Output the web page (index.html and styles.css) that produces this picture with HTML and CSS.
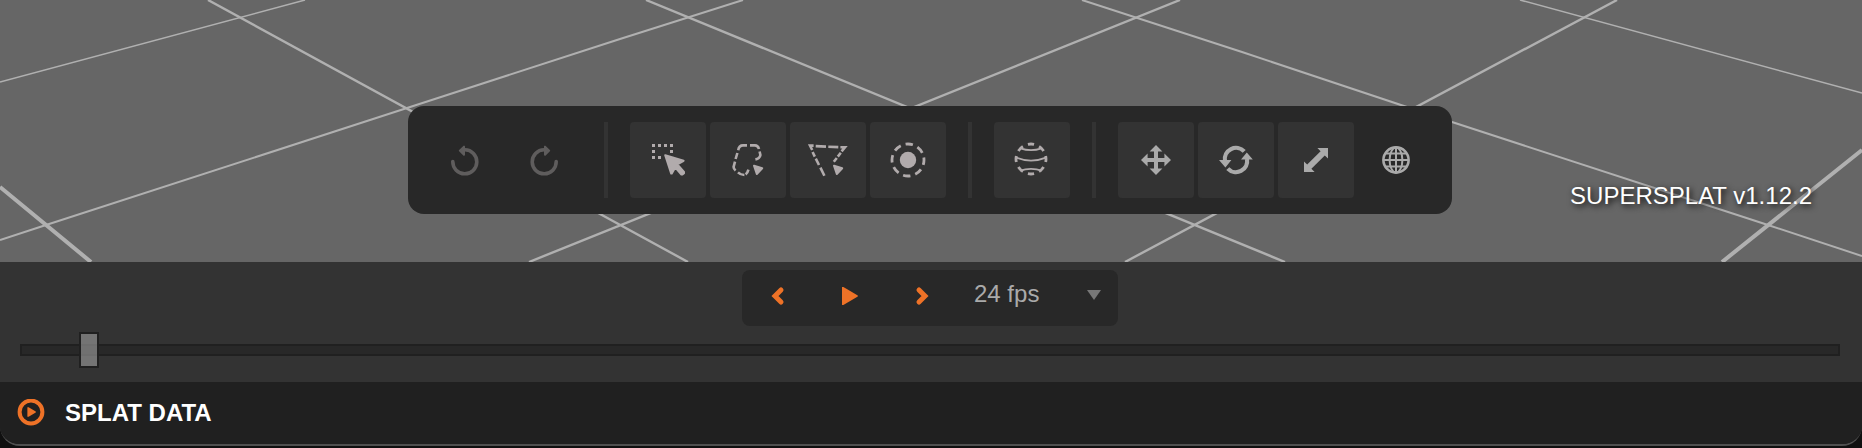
FILE: index.html
```html
<!DOCTYPE html>
<html lang="en">
<head>
<meta charset="utf-8">
<title>SuperSplat</title>
<link rel="stylesheet" href="styles.css">
</head>
<body>
<div class="app">
  <main class="viewport">
    <svg class="grid" viewBox="0 0 1862 262" preserveAspectRatio="xMidYMax slice" aria-hidden="true">
      <path class="grid-far" d="M0 82L305 0M1520 0L1862 93"/>
      <path class="grid-mid" d="M0 240L46 225L407 108L620 39L743 0M1082 0L1242 52L1452 122L1768 225L1862 256"/>
      <path class="grid-near" d="M208 0L688 262M529 262L1180 0M646 0L1285 262M1125 262L1617 0"/>
      <path class="grid-front" d="M0 187L91 262M1722 262L1862 150"/>
    </svg>
    <div class="toolbar" role="toolbar" aria-label="Tools">
      <button class="tool plain dim" aria-label="Undo"><svg viewBox="0 0 76 76">
        <path class="line bold round" d="M26.8 39.6A12 12 0 1 0 39 27.8"/>
        <path class="fill joined" d="M33.8 28.6L38 24.6V32.8Z"/></svg></button>
      <button class="tool plain dim" aria-label="Redo"><svg viewBox="0 0 76 76">
        <path class="line bold round" d="M50.2 39.6A12 12 0 1 1 38 27.8"/>
        <path class="fill joined" d="M43.2 28.6L39 24.6V32.8Z"/></svg></button>
      <span class="divider"></span>
      <button class="tool warm" aria-label="Rectangle select"><svg viewBox="0 0 76 76">
        <path class="fill" d="M22 22h3v3h-3zM28 22h3v3h-3zM34 22h3v3h-3zM40 22h3v3h-3zM22 28h3v3h-3zM40 28h3v3h-3zM22 34h3v3h-3zM28 34h3v3h-3z"/>
        <path class="fill joined" d="M35.2 33.2L53.6 38.8L47.4 42.4L54 49.8V51.2L52.4 52.6H51.4L45.2 45.4L41.8 51.6H41.2Z"/></svg></button>
      <button class="tool warm" aria-label="Lasso select"><svg viewBox="0 0 76 76">
        <path class="line" d="M28.2 28.2Q29 23.4 33 23.4H37M40 23.4H45Q48 23.4 49 27M49.6 29.5L50.4 33Q49.8 36.6 45.4 37.4M27.4 31L25.6 37M25 39.6L23.6 45Q23.6 47 25.6 48.6M28 50.4Q30.6 53 34.4 53M35.6 52.4Q37.6 51 38.4 47.6"/>
        <path class="fill joined" d="M44 43.8L52.2 46.2L46.8 52Z"/></svg></button>
      <button class="tool warm" aria-label="Polygon select"><svg viewBox="0 0 76 76">
        <path class="line" d="M23.6 23.6H20L22.2 28M22.6 30L24.8 34.6M25.8 36.6L29 43M30.4 45.6L34.4 53.8M25.7 24.1L36 24.6M38.3 24.7L48.3 25.1M50.4 25.2H55L51.6 29.4M50.8 30.8L47.8 34.6M46.8 36L43.8 39.8"/>
        <path class="fill joined" d="M44 43.8L52.2 46.2L46.8 52Z"/></svg></button>
      <button class="tool warm" aria-label="Brush select"><svg viewBox="0 0 76 76">
        <circle class="fill" cx="38" cy="38" r="8.2"/>
        <circle class="line ring" cx="38" cy="38" r="16" pathLength="80"/></svg></button>
      <span class="divider"></span>
      <button class="tool warm" aria-label="Sphere select"><svg viewBox="0 0 76 76">
        <circle class="line globe-ring" cx="37" cy="37" r="15" pathLength="80"/>
        <path class="line thin" d="M26.5 26.4Q37 30 47.5 26.4M22 35.6Q37 41.6 52 35.6M26 48.6Q37 45 48 48.6"/></svg></button>
      <span class="divider"></span>
      <button class="tool" aria-label="Move"><svg viewBox="0 0 76 76">
        <path class="fill" d="M38 23L44.4 29.6H40V36H46.4V31.6L53 38L46.4 44.4V40H40V46.4H44.4L38 53L31.6 46.4H36V40H29.6V44.4L23 38L29.6 31.6V36H36V29.6H31.6Z"/></svg></button>
      <button class="tool" aria-label="Rotate"><svg viewBox="0 0 76 76">
        <path class="line heavy" d="M27 39A11.2 11.2 0 0 1 46.2 29.4M49 37A11.2 11.2 0 0 1 29.8 46.6"/>
        <path class="fill" d="M21 38H33.4L27.4 45.4ZM54.8 37.4H43L48.8 30.4Z"/></svg></button>
      <button class="tool" aria-label="Scale"><svg viewBox="0 0 76 76">
        <path class="fill" d="M39.4 26H50V36.6L46.8 33.4L33.4 46.8L36.6 50H26V39.4L29.2 42.6L42.6 29.2Z"/></svg></button>
      <button class="tool plain" aria-label="World space"><svg viewBox="0 0 76 76">
        <circle class="line" cx="38" cy="38" r="12.6"/>
        <ellipse class="line slim" cx="38" cy="38" rx="6.4" ry="12.6"/>
        <path class="line slim" d="M38 25V51M26 38H50M28 31.6H48M28 44.4H48"/></svg></button>
    </div>
    <div class="version">SUPERSPLAT v1.12.2</div>
  </main>

  <section class="timeline" aria-label="Timeline">
    <div class="playback">
      <button class="step" aria-label="Previous key"><svg viewBox="0 0 24 24"><path class="chevron" d="M15 6L9 12L15 18"/></svg></button>
      <button class="step" aria-label="Play"><svg viewBox="0 0 24 24"><path class="fill" d="M4 3H5.4L19.8 11.4V12.6L5.4 21H4Z"/></svg></button>
      <button class="step" aria-label="Next key"><svg viewBox="0 0 24 24"><path class="chevron" d="M9 6L15 12L9 18"/></svg></button>
      <div class="rate">
        <select class="rate-select" aria-label="Frame rate"><option>24 fps</option></select>
        <svg class="caret" viewBox="0 0 14 10" aria-hidden="true"><path class="fill" d="M0 0H14L7 10Z"/></svg>
      </div>
    </div>
    <input class="scrubber" type="range" min="0" max="30" value="1" aria-label="Frame">
  </section>

  <button class="data-panel">
    <svg class="data-icon" viewBox="0 0 28 28" aria-hidden="true">
      <circle class="data-ring" cx="14" cy="13" r="11.4"/><path class="fill" d="M10.4 8.2H11.6L18.8 12.4V13.6L11.6 17.8H10.4Z"/></svg>
    <span>SPLAT DATA</span>
  </button>
</div>
</body>
</html>
```
FILE: styles.css
```css
* { box-sizing: border-box; }

body {
  margin: 0;
  background: #101010;
  color: #fff;
  font: 24px/28px "Liberation Sans", Arial, sans-serif;
}

button, select { font: inherit; color: inherit; border: 0; padding: 0; background: none; }

.app {
  display: flex;
  flex-direction: column;
  height: calc(100vh - 2px);
  overflow: hidden;
  border-bottom: 2px solid #505050;
  border-radius: 0 0 20px 20px;
  background: #202020;
}

.viewport {
  position: relative;
  flex: 1;
  display: flex;
  justify-content: center;
  align-items: flex-end;
  padding: 0 0 48px;
  background: #666;
}

.grid { position: absolute; inset: 0; width: 100%; height: 100%; }
.grid path { fill: none; stroke: #b0b0b0; }
.grid .grid-far { stroke-width: 1.5; }
.grid .grid-mid { stroke-width: 2; }
.grid .grid-near { stroke-width: 2.4; }
.grid .grid-front { stroke-width: 4; }

.toolbar {
  position: relative;
  display: flex;
  gap: 4px;
  margin-right: 2px;
  padding: 16px 18px;
  border-radius: 16px;
  background: #282828;
}

.tool {
  width: 76px;
  height: 76px;
  border-radius: 4px;
  background: #333;
  color: #aaa;
}
.tool svg { display: block; }
.tool.plain { background: none; }
.tool.warm { color: #b1abac; }
.tool.dim { color: #5f5d5d; }

.divider { width: 4px; margin: 0 18px; background: #333; }

.fill { fill: currentColor; }
.joined { stroke: currentColor; stroke-width: 2; stroke-linejoin: round; }
.line { fill: none; stroke: currentColor; stroke-width: 2.6; }
.bold { stroke-width: 3.6; }
.heavy { stroke-width: 4.2; }
.thin { stroke-width: 1.8; }
.slim { stroke-width: 2; }
.round { stroke-linecap: round; }
.ring { stroke-width: 2.8; stroke-dasharray: 6 4; stroke-dashoffset: 2; }
.globe-ring { stroke-width: 2.8; stroke-dasharray: 5.4 4.6; stroke-dashoffset: 2.7; }

.version {
  position: absolute;
  right: 50px;
  bottom: 52px;
  text-shadow: 2px 2px 6px #000;
}

.timeline {
  display: flex;
  flex-direction: column;
  align-items: center;
  gap: 6px;
  padding: 8px 22px 14px 20px;
  background: #333;
}

.playback {
  display: flex;
  align-items: flex-start;
  height: 56px;
  border-radius: 8px;
  background: #282828;
}

.step {
  display: flex;
  justify-content: center;
  align-items: center;
  width: 72px;
  height: 52px;
  color: #ee7227;
}
.step svg { width: 24px; height: 24px; }
.chevron { fill: none; stroke: currentColor; stroke-width: 5; stroke-linejoin: miter; stroke-linecap: round; }

.rate { position: relative; width: 160px; }
.rate-select {
  appearance: none;
  width: 100%;
  height: 48px;
  padding: 0 16px;
  color: #aaa;
}
.caret { position: absolute; right: 17px; top: 20px; width: 14px; height: 10px; color: #777; pointer-events: none; }

.scrubber {
  appearance: none;
  width: 100%;
  height: 36px;
  margin: 0;
  background: none;
}
.scrubber::-webkit-slider-runnable-track {
  height: 12px;
  border: 2px solid #202020;
  background: #282828;
}
.scrubber::-webkit-slider-thumb {
  appearance: none;
  width: 20px;
  height: 36px;
  margin: -14px -3px 0;
  border: 2px solid #202020;
  background: rgb(144 144 144 / 70%);
  background-clip: padding-box;
}

.data-panel {
  display: flex;
  align-items: center;
  gap: 20px;
  height: 62px;
  padding: 0 17px;
  background: #202020;
  font-weight: bold;
  text-align: left;
}
.data-icon { width: 28px; height: 28px; color: #ee7227; }
.data-ring { fill: none; stroke: currentColor; stroke-width: 4; }
```
